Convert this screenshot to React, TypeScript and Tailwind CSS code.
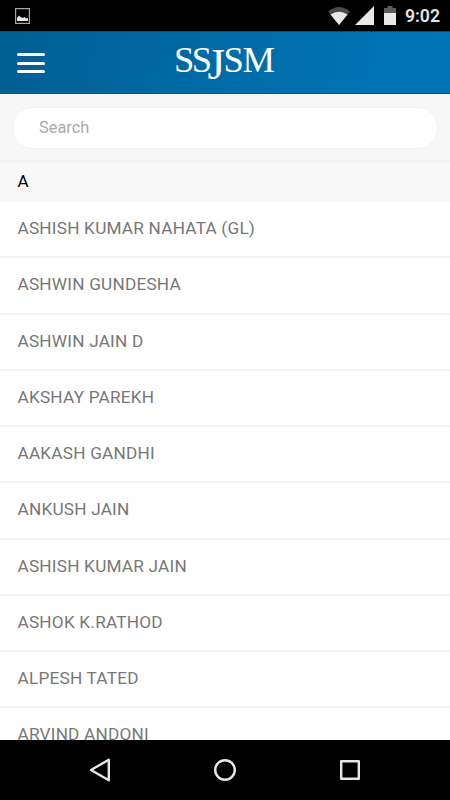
const members = [
  "ASHISH KUMAR NAHATA (GL)",
  "ASHWIN GUNDESHA",
  "ASHWIN JAIN D",
  "AKSHAY PAREKH",
  "AAKASH GANDHI",
  "ANKUSH JAIN",
  "ASHISH KUMAR JAIN",
  "ASHOK K.RATHOD",
  "ALPESH TATED",
  "ARVIND ANDONI",
];

function StatusBar() {
  return (
    <div className="flex h-[31px] shrink-0 items-center bg-black pr-[10px] pl-[15px]">
      {/* Screenshot notification */}
      <svg className="mt-px h-4 w-[15px]" viewBox="0 0 15 16" fill="none">
        <rect x="0.6" y="0.6" width="13.8" height="14.8" stroke="#a8a8a8" strokeWidth="1.2" />
        <path d="M2 13V10L4 7.5L5.5 9L8 10L9.5 9L11 10.5L13 10V13Z" fill="#e6e6e6" />
      </svg>

      <svg className="ml-auto h-[19px] w-[22px]" viewBox="0 0 22 19">
        <path d="M0 5.5Q11-3.5 22 5.5L11 19Z" fill="#4b4b4b" />
        <path d="M2.5 8.4Q11 3.2 19.5 8.4L11 19Z" fill="#e8e8e8" />
      </svg>
      <svg className="ml-[5px] h-[19px] w-[19px]" viewBox="0 0 19 19">
        <path d="M19 0V19H0Z" fill="#e8e8e8" />
      </svg>
      <svg className="ml-[10px] h-[19px] w-3" viewBox="0 0 12 19">
        <path d="M3.5 0H8.5V2H12V7H0V2H3.5Z" fill="#5c5c5c" />
        <path d="M0 7H12V19H0Z" fill="#e8e8e8" />
      </svg>
      <span className="mt-0.5 ml-[9px] w-[35px] text-[17.6px] leading-none font-semibold whitespace-nowrap text-[#e4e4e4]">
        9:02
      </span>
    </div>
  );
}

function Header() {
  return (
    <header className="flex h-[63px] shrink-0 items-center border-t border-b border-t-[#00507f] border-b-[#00549a] bg-linear-[100deg] from-[#005f94] to-[#0074b5] to-85% pl-[17px]">
      <button className="mt-px flex w-7 flex-col gap-[5.5px]" aria-label="Menu">
        <span className="h-[3px] rounded-full bg-white" />
        <span className="h-[3px] rounded-full bg-white" />
        <span className="h-[3px] rounded-full bg-white" />
      </button>
      <svg className="ml-[129px] h-12 w-[104px] overflow-visible font-['Liberation_Serif',serif]" viewBox="0 0 104 48" fill="#fff" fontSize="36.5">
        {/* The J is larger and hangs below the baseline */}
        <text y="33">
          <tspan x="0">S</tspan>
          <tspan x="17.8">S</tspan>
          <tspan x="33.5" y="40" fontSize="45">J</tspan>
          <tspan x="49.5" y="33">S</tspan>
          <tspan x="68.5">M</tspan>
        </text>
      </svg>
    </header>
  );
}

function NavBar() {
  return (
    <nav className="flex h-[60px] shrink-0 items-center justify-center gap-[101px] bg-black">
      <svg className="h-6 w-6" viewBox="0 0 24 24" fill="none" stroke="#e6e6e6" strokeWidth="2.4" strokeLinejoin="round">
        <path d="M20.8 1.8V22.2L3 12Z" />
      </svg>
      <svg className="h-6 w-6" viewBox="0 0 24 24" fill="none" stroke="#e6e6e6" strokeWidth="2.4">
        <circle cx="12" cy="12" r="9.8" />
      </svg>
      <svg className="h-6 w-6" viewBox="0 0 24 24" fill="none" stroke="#e6e6e6" strokeWidth="2.4" strokeLinejoin="round">
        <rect x="3.2" y="3.2" width="17.6" height="17.6" />
      </svg>
    </nav>
  );
}

export default function App() {
  return (
    <div className="flex h-screen w-full flex-col overflow-hidden bg-white font-[Roboto,sans-serif]">
      <StatusBar />
      <Header />

      <main className="min-h-0 flex-1 overflow-hidden">
        <div className="h-[68px] border-b-2 border-[#f2f2f2] bg-[#f7f7f7] px-3 pt-[13px]">
          <input
            className="h-[42px] w-full rounded-[20px] border border-[#f1f1f1] bg-white px-[26px] pb-0.5 text-[16.4px] text-[#757575] outline-none placeholder:text-[#aaa]"
            placeholder="Search"
          />
        </div>
        <h2 className="flex h-10 items-center bg-[#f8f8f8] pb-px pl-[17.5px] text-[17px] text-black">A</h2>
        <ul>
          {members.map((name) => (
            <li
              key={name}
              className="flex h-[56.25px] items-center border-b-2 border-[#f5f5f5] pl-[17.5px] text-[17.2px] tracking-[0.22px] text-[#777]"
            >
              {name}
            </li>
          ))}
        </ul>
      </main>

      <NavBar />
    </div>
  );
}
